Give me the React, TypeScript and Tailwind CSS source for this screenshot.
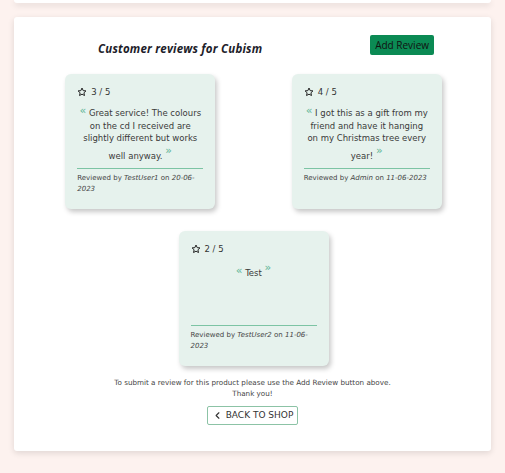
import { ChevronLeft } from 'lucide-react';

type Review = {
  rating: number;
  text: string;
  user: string;
  date: string;
};

const reviews: Review[] = [
  { rating: 3, text: 'Great service! The colours on the cd I received are slightly different but works well anyway.', user: 'TestUser1', date: '20-06-2023' },
  { rating: 4, text: 'I got this as a gift from my friend and have it hanging on my Christmas tree every year!', user: 'Admin', date: '11-06-2023' },
  { rating: 2, text: 'Test', user: 'TestUser2', date: '11-06-2023' },
];

function StarOutline() {
  return (
    <svg viewBox="0 0 24 24" className="w-[10px] h-[10px]" fill="none" stroke="#222" strokeWidth="2.4" strokeLinejoin="round">
      <path d="M12 2.5l2.9 6.2 6.6.7-4.9 4.5 1.4 6.6L12 17.2l-5.9 3.3 1.4-6.6-4.9-4.5 6.6-.7z" />
    </svg>
  );
}

function ReviewCard({ review }: { review: Review }) {
  return (
    <div className="w-[150px] h-[135px] bg-[#e6f2ed] rounded-[6px] shadow-[2px_3px_5px_rgba(0,0,0,0.22)] px-3 pt-[13px] pb-2 font-['DejaVu_Sans',sans-serif]">
      <div className="flex items-center gap-[4px] text-[8.5px] text-[#333] leading-none">
        <StarOutline />
        <span>{review.rating} / 5</span>
      </div>
      <div className="h-[71px] pt-[8px]">
        <p className="text-center text-[8.5px] leading-[12.5px] text-[#3a3a3a]">
          <span className="inline-block text-[#5eb596] text-[11px] leading-none align-[2px]">«</span> {review.text}{' '}
          <span className="inline-block text-[#5eb596] text-[11px] leading-none align-[5px]">»</span>
        </p>
      </div>
      <div className="border-t border-[#7cc4a4] pt-[4px] text-[7px] leading-[11px] text-[#444]">
        Reviewed by <i>{review.user}</i> on <i>{review.date}</i>
      </div>
    </div>
  );
}

export default function App() {
  return (
    <div className="min-h-[473px] bg-[#fdf2ef] font-['Open_Sans',sans-serif] overflow-hidden">
      <div className="mx-[14px] h-[3px] bg-white rounded-b-[3px] shadow-[0_2px_6px_rgba(0,0,0,0.15)]" />
      <div className="mx-[14px] mt-[14px] h-[434px] bg-white rounded-[3px] shadow-[0_2px_6px_rgba(0,0,0,0.12)] pt-[18px]">
        <div className="flex items-start pl-[84px] pr-[57px]">
          <h2 className="font-bold italic text-[11.5px] text-[#1d1d2a] mt-[5px] tracking-[0.2px]">Customer reviews for Cubism</h2>
          <div className="flex-1" />
          <button className="bg-[#0b8a54] text-[#111] text-[10px] px-[5px] h-[20px] rounded-[2px]">Add Review</button>
        </div>
        <div className="mt-[17px] ml-[13px] mr-[11px] flex flex-wrap justify-center gap-y-[22px]">
          {reviews.map((r, i) => (
            <div key={i} className="w-1/2 flex justify-center">
              <ReviewCard review={r} />
            </div>
          ))}
        </div>
        <div className="mt-[11px] text-center text-[7.2px] leading-[11px] text-[#444] font-['DejaVu_Sans',sans-serif]">
          <p>To submit a review for this product please use the Add Review button above.</p>
          <p>Thank you!</p>
        </div>
        <div className="mt-[7px] flex justify-center">
          <button className="flex items-center gap-[3px] border border-[#8cc3a6] rounded-[2px] h-[19px] px-[4px] text-[9px] text-[#333] font-['DejaVu_Sans',sans-serif]">
            <ChevronLeft className="w-[11px] h-[11px]" strokeWidth={2.5} />
            BACK TO SHOP
          </button>
        </div>
      </div>
    </div>
  );
}
